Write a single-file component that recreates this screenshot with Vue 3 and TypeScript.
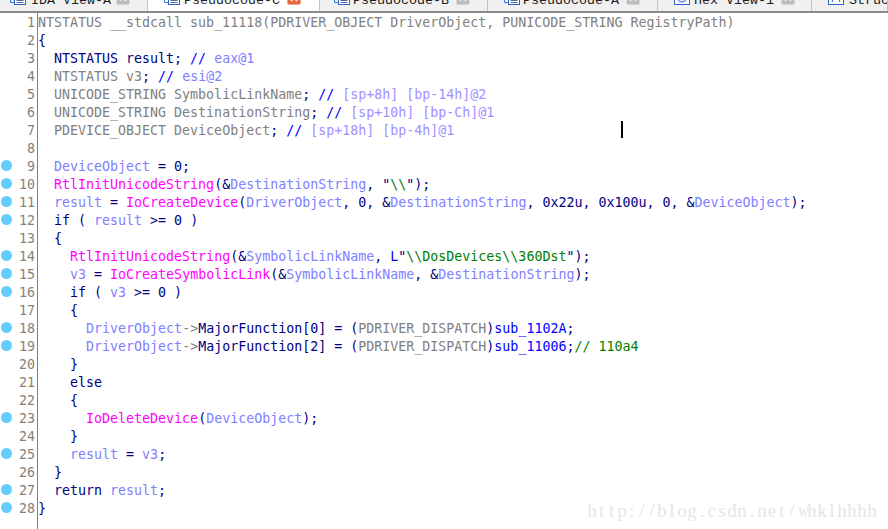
<script setup lang="ts">
interface Tab { label: string; width: number; pad: number; gap: number; closeGap: number; kind: 'doc' | 'hex' | 'struct'; active?: boolean }
const tabs: Tab[] = [
  { label: 'IDA View-A', width: 148, pad: 10, gap: 5, closeGap: 5, kind: 'doc' },
  { label: 'Pseudocode-C', width: 172, pad: 16, gap: 4, closeGap: 7, kind: 'doc', active: true },
  { label: 'Pseudocode-B', width: 168, pad: 14, gap: 3, closeGap: 7, kind: 'doc' },
  { label: 'Pseudocode-A', width: 170, pad: 16, gap: 3, closeGap: 7, kind: 'doc' },
  { label: 'Hex View-1', width: 154, pad: 16, gap: 4, closeGap: 7, kind: 'hex' },
  { label: 'Structures', width: 76, pad: 16, gap: 5, closeGap: 7, kind: 'struct' },
]

const src: string[] = [
  't|NTSTATUS __stdcall sub_11118(PDRIVER_OBJECT DriverObject, PUNICODE_STRING RegistryPath)',
  'p|{',
  'p|  NTSTATUS result; |c|// |l|eax@1',
  'p|  |t|NTSTATUS v3|p|; |c|// |l|esi@2',
  'p|  |t|UNICODE_STRING SymbolicLinkName|p|; |c|// |v|[sp+8h] [bp-14h]@2',
  'p|  |t|UNICODE_STRING DestinationString|p|; |c|// |v|[sp+10h] [bp-Ch]@1',
  'p|  |t|PDEVICE_OBJECT DeviceObject|p|; |c|// |v|[sp+18h] [bp-4h]@1',
  '',
  'p|  |l|DeviceObject|p| = 0;',
  'p|  |f|RtlInitUnicodeString|p|(&|l|DestinationString|p|, "|s|\\\\|p|");',
  'p|  |l|result|p| = |f|IoCreateDevice|p|(|l|DriverObject|p|, 0, &|l|DestinationString|p|, 0x22u, 0x100u, 0, &|l|DeviceObject|p|);',
  'p|  if ( |l|result|p| >= 0 )',
  'p|  {',
  'p|    |f|RtlInitUnicodeString|p|(&|l|SymbolicLinkName|p|, |c|L|p|"|s|\\\\DosDevices\\\\360Dst|p|");',
  'p|    |l|v3|p| = |f|IoCreateSymbolicLink|p|(&|l|SymbolicLinkName|p|, &|l|DestinationString|p|);',
  'p|    if ( |l|v3|p| >= 0 )',
  'p|    {',
  'p|      |l|DriverObject|t|->|p|MajorFunction[0] = (|t|PDRIVER_DISPATCH|p|)|c|sub_1102A|p|;',
  'p|      |l|DriverObject|t|->|p|MajorFunction[2] = (|t|PDRIVER_DISPATCH|p|)|c|sub_11006|p|;|s|// 110a4',
  'p|    }',
  'p|    else',
  'p|    {',
  'p|      |f|IoDeleteDevice|p|(|l|DeviceObject|p|);',
  'p|    }',
  'p|    |l|result|p| = |l|v3|p|;',
  'p|  }',
  'p|  return |l|result|p|;',
  'p|}',
]

const breakpoints = new Set([9, 10, 11, 12, 14, 15, 16, 18, 19, 23, 25, 27, 28])

const lines = src.map((line, i) => {
  const parts = line ? line.split('|') : []
  const segs: { cls: string; text: string }[] = []
  for (let k = 0; k + 1 < parts.length; k += 2) segs.push({ cls: parts[k], text: parts[k + 1] })
  return { n: i + 1, segs, bp: breakpoints.has(i + 1) }
})

const mark = 'http://blog.csdn.net/whklhhhh'.split('')
</script>

<template>
  <div class="window">
    <div class="tabbar">
      <div
        v-for="t in tabs"
        :key="t.label"
        class="tab"
        :class="{ active: t.active }"
        :style="{ width: t.width + 'px', paddingLeft: t.pad + 'px' }"
      >
        <svg class="tab-icon" width="16" height="16" viewBox="0 0 16 16" :style="{ marginRight: t.gap + 'px' }">
          <template v-if="t.kind === 'doc'">
            <path d="M0.5 8.5V13.5H5" fill="none" stroke="#3a78d8" />
            <rect x="4.5" y="0.5" width="11" height="15" fill="#fff" stroke="#2a62c8" />
            <path d="M6.5 11.5h7M6.5 13.5h7" stroke="#4a6a98" fill="none" />
          </template>
          <template v-else-if="t.kind === 'hex'">
            <rect x="0.5" y="0.5" width="15" height="15" fill="#fff" stroke="#2a62d8" />
            <circle cx="8" cy="8" r="5" fill="#dfe8ff" stroke="#2a62d8" />
          </template>
          <template v-else>
            <rect x="0.5" y="0.5" width="15" height="15" fill="#fff" stroke="#2a62d8" />
            <path d="M4 13 8 3l4 10M5.5 10h5" fill="none" stroke="#2a62d8" />
          </template>
        </svg>
        <span class="tab-label">{{ t.label }}</span>
        <svg v-if="t.width > 100" class="tab-close" width="14" height="14" viewBox="0 0 14 14" :style="{ marginLeft: t.closeGap + 'px' }">
          <rect x="0.5" y="0.5" width="13" height="13" rx="1.5" :fill="t.active ? '#e8663c' : '#bcbcbc'" :stroke="t.active ? '#eda88a' : '#d6d6d6'" />
          <path d="M4 4l6 6M10 4l-6 6" :stroke="t.active ? '#fff' : '#e8e8e8'" stroke-width="1.6" fill="none" />
        </svg>
      </div>
    </div>
    <div class="editor">
      <div v-for="l in lines" :key="l.n" class="row">
        <div class="gutter">
          <span v-if="l.bp" class="dot"></span>
          <span class="num">{{ l.n }}</span>
        </div>
        <div class="code">
          <span v-for="(s, i) in l.segs" :key="i" :class="s.cls">{{ s.text }}</span>
        </div>
      </div>
      <div class="rest">
        <div class="gutter"></div>
      </div>
      <div class="caret"></div>
      <div class="watermark">
        <span v-for="(c, i) in mark" :key="i" class="mc" :class="{ wide: c === 'w' }">{{ c }}</span>
      </div>
    </div>
  </div>
</template>

<style>
html, body { margin: 0; padding: 0; background: #fff; overflow: hidden; }
</style>

<style scoped>
.window { width: 888px; height: 529px; display: flex; flex-direction: column; overflow: hidden; background: #fff; }
.tabbar { height: 11px; flex: none; display: flex; background: #f0f0f0; border-bottom: 2px solid #8a8a8a; overflow: hidden; }
.tab {
  flex: none;
  box-sizing: border-box;
  height: 11px;
  display: flex;
  align-items: flex-end;
  overflow: hidden;
  border-right: 1px solid #c4c4c4;
  font: 13.33px/16px "Liberation Mono", monospace;
  color: #1c1c1c;
}
.tab.active { background: #fff; }
.tab-icon { flex: none; margin-bottom: 6px; }
.tab-label { flex: none; width: 80px; height: 16px; margin-bottom: 2px; white-space: nowrap; }
.tab-close { flex: none; margin-bottom: 6px; }
.tab:nth-child(n + 2) .tab-label { width: 96px; }
.tab:nth-child(5) .tab-label { width: 80px; }

.editor { position: relative; flex: 1; min-height: 0; display: flex; flex-direction: column; }
.row { display: flex; height: 18px; flex: none; }
.rest { flex: 1; display: flex; }
.gutter {
  position: relative;
  flex: none;
  width: 37px;
  height: 100%;
  border-right: 1px solid #808080;
  text-align: right;
}
.num { display: block; padding-right: 2px; font: 13.3px/20px "DejaVu Sans Mono", monospace; color: #8a8078; }
.dot { position: absolute; left: 1px; top: 3px; width: 11px; height: 11px; border-radius: 50%; background: #62ceff; }
.code { flex: 1; white-space: pre; font: 13.3px/20px "DejaVu Sans Mono", monospace; color: #000080; }
.t { color: #808080; }
.p { color: #000080; }
.c { color: #0000ff; }
.l { color: #8080ff; }
.v { color: #a090ff; }
.f { color: #ff00ff; }
.s { color: #008000; }
.caret { position: absolute; left: 621px; top: 108px; width: 2px; height: 17px; background: #000; }
.watermark { position: absolute; left: 587px; top: 487px; display: flex; font: 19px/22px "Liberation Serif", serif; color: #e6e6e2; }
.mc { width: 10px; text-align: center; flex: none; display: inline-block; }
.mc.wide { transform: scaleX(0.72); }
</style>
